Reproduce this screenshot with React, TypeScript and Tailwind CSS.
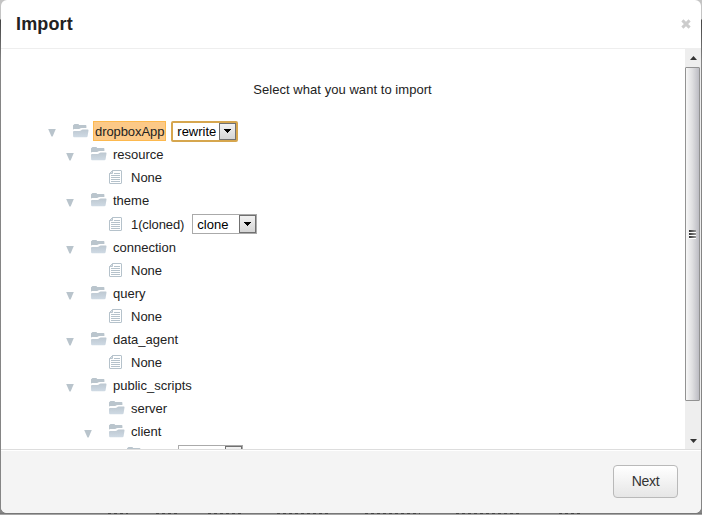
import React from "react";

const FONT = "font-['Liberation_Sans',Arial,sans-serif]";

function Folder() {
  return (
    <svg width="16" height="14" viewBox="0 0 16 14" className="shrink-0">
      <defs>
        <linearGradient id="fold" x1="0" y1="0" x2="0" y2="1">
          <stop offset="0" stopColor="#bdc8d1" />
          <stop offset="1" stopColor="#cfdae4" />
        </linearGradient>
      </defs>
      <path d="M0 6V1.6Q0 0.8 0.8 0.7L1.4 0H5.4L6.2 1H12.6Q13.4 1 13.4 1.8V4H8.8Q7.6 4 7 4.6Q6.4 5.1 5.4 5.1H1Q0.3 5.2 0 6Z" fill="#bac5cd" />
      <path d="M0 8Q0 7 1 7H6.4Q7.6 7 8.2 6.3Q8.8 5.7 9.8 5.6H14.8Q15.6 5.6 15.5 6.4L14.6 12.2Q14.4 13.2 13.4 13.2H1Q0.2 13.2 0.1 12.2Z" fill="url(#fold)" />
    </svg>
  );
}

function Doc() {
  return (
    <svg width="13" height="14" viewBox="0 0 13 14" className="shrink-0">
      <path d="M3.5 0.5H12Q12.5 0.5 12.5 1V13Q12.5 13.5 12 13.5H1Q0.5 13.5 0.5 13V3.5Z" fill="#fff" stroke="#b5c2cb" />
      <path d="M3.5 0.5V3.5H0.5Z" fill="#d6dee4" stroke="#b9c5ce" />
      <path d="M5 3.5H11M2 5.5H11M2 7.5H11M2 9.5H11M2 11.5H11" stroke="#b5c2cb" />
    </svg>
  );
}

function Select({ value, focused }: { value: string; focused?: boolean }) {
  return (
    <span
      className={`flex shrink-0 justify-between bg-white ${
        focused
          ? "-ml-px mt-px h-[21px] w-[67px] rounded-[2px] border-2 border-[#d6a64e]"
          : "h-5 w-[65px] border border-[#aaaaaa]"
      }`}
    >
      <span className={`pl-1 text-black ${focused ? "leading-[18px]" : "leading-[20px]"}`}>{value}</span>
      <span className="flex h-full w-[17px] items-center justify-center border border-[#707070] bg-linear-to-b from-[#f2f2f2] to-[#d5d5d5]">
        <svg width="7" height="4" viewBox="0 0 7 4" shapeRendering="crispEdges">
          <path d="M0 0H7L3.5 4Z" fill="#000" />
        </svg>
      </span>
    </span>
  );
}

type Node = { name: string; level: number; kind: "folder" | "doc"; open?: boolean; select?: string; root?: boolean };

const nodes: Node[] = [
  { name: "dropboxApp", level: 0, kind: "folder", open: true, select: "rewrite", root: true },
  { name: "resource", level: 1, kind: "folder", open: true },
  { name: "None", level: 2, kind: "doc" },
  { name: "theme", level: 1, kind: "folder", open: true },
  { name: "1(cloned)", level: 2, kind: "doc", select: "clone" },
  { name: "connection", level: 1, kind: "folder", open: true },
  { name: "None", level: 2, kind: "doc" },
  { name: "query", level: 1, kind: "folder", open: true },
  { name: "None", level: 2, kind: "doc" },
  { name: "data_agent", level: 1, kind: "folder", open: true },
  { name: "None", level: 2, kind: "doc" },
  { name: "public_scripts", level: 1, kind: "folder", open: true },
  { name: "server", level: 2, kind: "folder" },
  { name: "client", level: 2, kind: "folder", open: true },
  { name: "", level: 3, kind: "folder", select: "" },
];

const indent = ["pl-[47px]", "pl-[65px]", "pl-[83px]", "pl-[101px]"];

function Row({ node }: { node: Node }) {
  const tall = node.select !== undefined && !node.root;
  return (
    <li className={`flex shrink-0 items-center ${tall ? "h-6 pt-0.5" : "h-[23px]"} ${indent[node.level]}`}>
      <span className={`w-6 shrink-0 ${node.root ? "mt-[5px]" : "mt-[7px]"}`}>
        {node.open && (
          <svg width="8" height="8" viewBox="0 0 8 8">
            <path d="M0.2 0H7.8L4.6 7.6H3.5Z" fill="#b9c4cc" />
          </svg>
        )}
      </span>
      <span className={`flex w-[17px] shrink-0 pl-px ${node.name ? "" : "-mt-0.5"}`}>
        {node.kind === "folder" ? <Folder /> : <Doc />}
      </span>
      <span
        className={`ml-1 mr-1.5 h-5 whitespace-nowrap border px-px leading-[20px] ${
          node.root ? "border-[#fdb94e] bg-[#fcc987] tracking-[-0.08px]" : "border-transparent"
        } ${node.name ? (tall ? "-mr-px tracking-[-0.1px]" : "") : "w-[25px]"}`}
      >
        {node.name}
      </span>
      {node.select !== undefined && <Select value={node.select} focused={node.root} />}
    </li>
  );
}

function Scrollbar() {
  return (
    <div className="flex w-4 shrink-0 flex-col bg-[#eeeeee]">
      <div className="flex h-[18px] items-center pl-[5px]">
        <svg width="7" height="4" viewBox="0 0 7 4"><path d="M0 4L3.5 0L7 4Z" fill="#333" /></svg>
      </div>
      <div className="flex h-[334px] w-[15px] items-center justify-center rounded-[1px] border border-[#929292] bg-linear-to-r from-[#f7f7f7] via-[#dedee0] to-[#bcbcc3]">
        <div className="flex flex-col">
          <i className="h-[3px] w-[7px] border-b border-white bg-linear-to-r from-[#333] to-[#999]" />
          <i className="h-[3px] w-[7px] border-b border-white bg-linear-to-r from-[#333] to-[#999]" />
          <i className="h-[3px] w-[7px] border-b border-white bg-linear-to-r from-[#333] to-[#999]" />
        </div>
      </div>
      <div className="mt-auto flex h-4 items-center pl-[5px]">
        <svg width="7" height="4" viewBox="0 0 7 4"><path d="M0 0H7L3.5 4Z" fill="#333" /></svg>
      </div>
    </div>
  );
}

// Slivers of the dimmed page that stay visible under the dialog: left margin and width.
const slivers = [
  "ml-[108px] w-[20px]",
  "ml-[28px] w-[23px]",
  "ml-[29px] w-[36px]",
  "ml-[33px] w-[54px]",
  "ml-[34px] w-[55px]",
  "ml-[36px] w-[66px]",
  "ml-[37px] w-[24px]",
];

export default function App() {
  return (
    <div className={`h-[515px] w-[702px] overflow-hidden bg-linear-to-b from-[#c4c4c4] from-[19px] via-[#444] via-[20px] to-[#858585] to-[62px] text-[13px] text-[#222] ${FONT}`}>
      <section className="mx-px flex h-[513px] flex-col overflow-hidden rounded-md bg-white">
        <header className="flex h-[49px] shrink-0 items-center justify-between border-b border-[#eeeeee] pl-[15px] pr-[10px]">
          <h1 className="text-[18px] font-bold leading-6 tracking-[0.15px] text-[#222]">Import</h1>
          <svg width="10" height="10" viewBox="0 0 10 10"><path d="M1.4 1.4L8.6 8.6M8.6 1.4L1.4 8.6" stroke="#cccccc" strokeWidth="3" /></svg>
        </header>
        <main className="flex h-[400px] shrink-0">
          <div className="h-[400px] flex-1 overflow-hidden">
            <p className="pr-px pt-[31px] text-center leading-5 tracking-[0.05px]">Select what you want to import</p>
            <ul className="mt-[19px] flex flex-col">
              {nodes.map((node, i) => <Row key={i} node={node} />)}
            </ul>
          </div>
          <Scrollbar />
        </main>
        <footer className="flex flex-1 items-start justify-end border-t border-[#dddddd] bg-[#f4f4f4] pr-[23px] pt-[15px] shadow-[inset_0_1px_0_#fff]">
          <button className="h-[33px] w-[65px] rounded border border-[#b9b9b9] bg-linear-to-b from-white to-[#e6e6e6] text-[14px] tracking-[-0.3px] text-[#333]">Next</button>
        </footer>
      </section>
      <div className="flex h-0.5 border-t border-[#777] bg-[#a5a5a5]">
        {slivers.map((s) => (
          <i key={s} className={`-mt-px h-px shrink-0 bg-[repeating-linear-gradient(90deg,#444_0_3px,#777_3px_6px)] ${s}`} />
        ))}
      </div>
    </div>
  );
}
